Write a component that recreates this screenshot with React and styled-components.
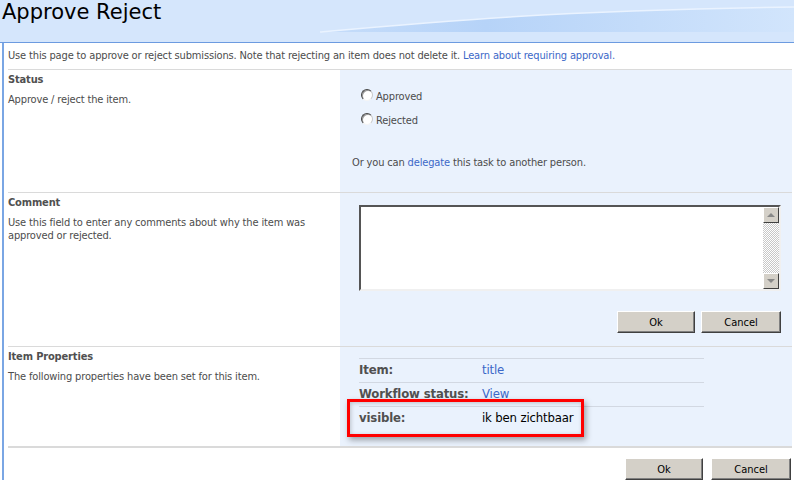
import React from 'react'
import styled, { createGlobalStyle } from 'styled-components'

const GlobalStyle = createGlobalStyle`
  body {
    margin: 0;
    background: #fff;
    font-family: 'DejaVu Sans Condensed', 'DejaVu Sans', sans-serif;
    font-size: 11px;
    letter-spacing: -0.15px;
    color: #4c4c4c;
  }
`

const Header = styled.div`
  position: relative;
  height: 42px;
  background: #d5e6fc;
  border-bottom: 1px solid #6c9be0;
  overflow: hidden;

  h1 {
    position: relative;
    margin: 0;
    padding: 0 0 0 2px;
    font-family: 'DejaVu Sans', sans-serif;
    font-size: 21px;
    letter-spacing: 0;
    font-weight: normal;
    color: #000;
    line-height: 25px;
  }
`

const Swoosh = styled.svg`
  position: absolute;
  left: 0;
  top: 0;
`

const Page = styled.div`
  margin-left: 2px;
  border-left: 2px solid #7aa6e4;
  padding: 0 2px 0 4px;
`

const Intro = styled.div`
  height: 26px;
  padding-top: 6px;
  box-sizing: border-box;
  line-height: 13px;
`

const Link = styled.a`
  color: #3c68c8;
  text-decoration: none;
`

const Section = styled.div`
  display: grid;
  grid-template-columns: 332px 1fr;
  border-top: ${p => (p.$thick ? 2 : 1)}px solid #dadada;
  min-height: ${p => p.$height}px;
`

const Label = styled.div`
  padding: 3px 20px 0 0;
  line-height: 13px;

  h3 {
    margin: 0 0 7px;
    font-size: 11px;
    font-weight: bold;
    color: #505050;
  }
`

const Body = styled.div`
  position: relative;
  background: #eaf2fd;
  display: flex;
  flex-direction: column;
`

const Radios = styled.div`
  display: flex;
  flex-direction: column;
  gap: 11px;
  padding: 20px 0 0 21px;
`

const RadioRow = styled.label`
  display: flex;
  align-items: center;
  gap: 3px;
  line-height: 13px;
`

const RadioDot = styled.span`
  width: 10px;
  height: 10px;
  border-radius: 50%;
  border: 1px solid;
  border-color: #444 #c8c8c8 #f4f4f4 #444;
  background: #fff;
  box-shadow: inset 1px 1px 0 #999;
  margin-top: -4px;
`

const Delegate = styled.div`
  padding: 29px 0 0 12px;
  line-height: 13px;
`

const TextBox = styled.div`
  margin: 12px 0 0 19px;
  width: 422px;
  height: 86px;
  box-sizing: border-box;
  background: #fff;
  border: 2px solid;
  border-color: #555 #f0f0f0 #f0f0f0 #555;
  display: flex;
  justify-content: flex-end;
`

const ScrollBar = styled.div`
  width: 16px;
  display: flex;
  flex-direction: column;
  justify-content: space-between;
  background: repeating-conic-gradient(#c8c8c8 0 25%, #fff 0 50%) 0 0 / 2px 2px;
`

const ScrollBtn = styled.div`
  height: 16px;
  box-sizing: border-box;
  background: #d4d0c8;
  border: 1px solid;
  border-color: #fff #404040 #404040 #fff;
  display: flex;
  align-items: center;
  justify-content: center;
`

const Arrow = styled.span`
  width: 0;
  height: 0;
  border-left: 4px solid transparent;
  border-right: 4px solid transparent;
  ${p => (p.$down ? 'border-top: 4px solid #888;' : 'border-bottom: 4px solid #888;')}
`

const Buttons = styled.div`
  display: flex;
  justify-content: flex-end;
  gap: ${p => p.$gap}px;
  padding: ${p => p.$pad};
`

const Button = styled.button`
  width: ${p => p.$w}px;
  height: 22px;
  background: #d4d0c8;
  border: 1px solid;
  border-color: #fff #404040 #404040 #fff;
  box-shadow: inset -1px -1px 0 #808080;
  font-family: 'DejaVu Sans Condensed', 'DejaVu Sans', sans-serif;
  font-size: 11px;
  color: #000;
  padding: 0;
`

const PropTable = styled.div`
  margin: 11px 0 0 19px;
  width: 345px;
  display: grid;
  grid-template-columns: 123px 1fr;
  font-size: 13px;
`

const PropCell = styled.div`
  height: 23px;
  line-height: 21px;
  border-top: ${p => (p.$line ? '1px solid #d2d8e2' : 'none')};
  font-weight: ${p => (p.$bold ? 'bold' : 'normal')};
  color: ${p => (p.$bold ? '#505050' : '#000')};
`

const Highlight = styled.div`
  position: absolute;
  left: 7px;
  top: 52px;
  width: 231px;
  height: 32px;
  border: 3px solid #ff0000;
  box-shadow: 2px 3px 6px rgba(0, 0, 0, 0.35), inset 1px 1px 4px rgba(0, 0, 0, 0.2);
`

const App = () => {
  const props = [
    { name: 'Item:', value: <Link href="#">title</Link>, line: true },
    { name: 'Workflow status:', value: <Link href="#">View</Link>, line: true },
    { name: 'visible:', value: 'ik ben zichtbaar', line: true },
  ]

  return (
    <>
      <GlobalStyle />
      <Header>
        <Swoosh width="794" height="42">
          <defs>
            <linearGradient id="band" x1="0" x2="1" y1="0" y2="0">
              <stop offset="0" stopColor="#c6ddfa" />
              <stop offset="0.35" stopColor="#b6d3f8" />
              <stop offset="1" stopColor="#d2e5fc" />
            </linearGradient>
          </defs>
          <path d="M320 32 C 430 22, 560 10, 794 7 L794 32 Z" fill="url(#band)" />
          <path d="M320 32 C 430 22, 560 10, 794 7" fill="none" stroke="#eaf3ff" strokeWidth="1.5" />
        </Swoosh>
        <h1>Approve Reject</h1>
      </Header>
      <Page>
        <Intro>
          Use this page to approve or reject submissions. Note that rejecting an item does not delete it.{' '}
          <Link href="#">Learn about requiring approval.</Link>
        </Intro>

        <Section $height={122}>
          <Label>
            <h3>Status</h3>
            Approve / reject the item.
          </Label>
          <Body>
            <Radios>
              <RadioRow><RadioDot />Approved</RadioRow>
              <RadioRow><RadioDot />Rejected</RadioRow>
            </Radios>
            <Delegate>
              Or you can <Link href="#">delegate</Link> this task to another person.
            </Delegate>
          </Body>
        </Section>

        <Section $height={153}>
          <Label>
            <h3>Comment</h3>
            Use this field to enter any comments about why the item was approved or rejected.
          </Label>
          <Body>
            <TextBox>
              <ScrollBar>
                <ScrollBtn><Arrow /></ScrollBtn>
                <ScrollBtn><Arrow $down /></ScrollBtn>
              </ScrollBar>
            </TextBox>
            <Buttons $gap={6} $pad="20px 11px 0 0">
              <Button $w={78}>Ok</Button>
              <Button $w={80}>Cancel</Button>
            </Buttons>
          </Body>
        </Section>

        <Section $height={99}>
          <Label>
            <h3>Item Properties</h3>
            The following properties have been set for this item.
          </Label>
          <Body>
            <PropTable>
              {props.map(p => (
                <React.Fragment key={p.name}>
                  <PropCell $bold $line={p.line}>{p.name}</PropCell>
                  <PropCell $line={p.line}>{p.value}</PropCell>
                </React.Fragment>
              ))}
            </PropTable>
            <Highlight />
          </Body>
        </Section>

        <Section $thick $height={0} />
        <Buttons $gap={8} $pad="10px 1px 0 0">
          <Button $w={78}>Ok</Button>
          <Button $w={80}>Cancel</Button>
        </Buttons>
      </Page>
    </>
  )
}

export default App
